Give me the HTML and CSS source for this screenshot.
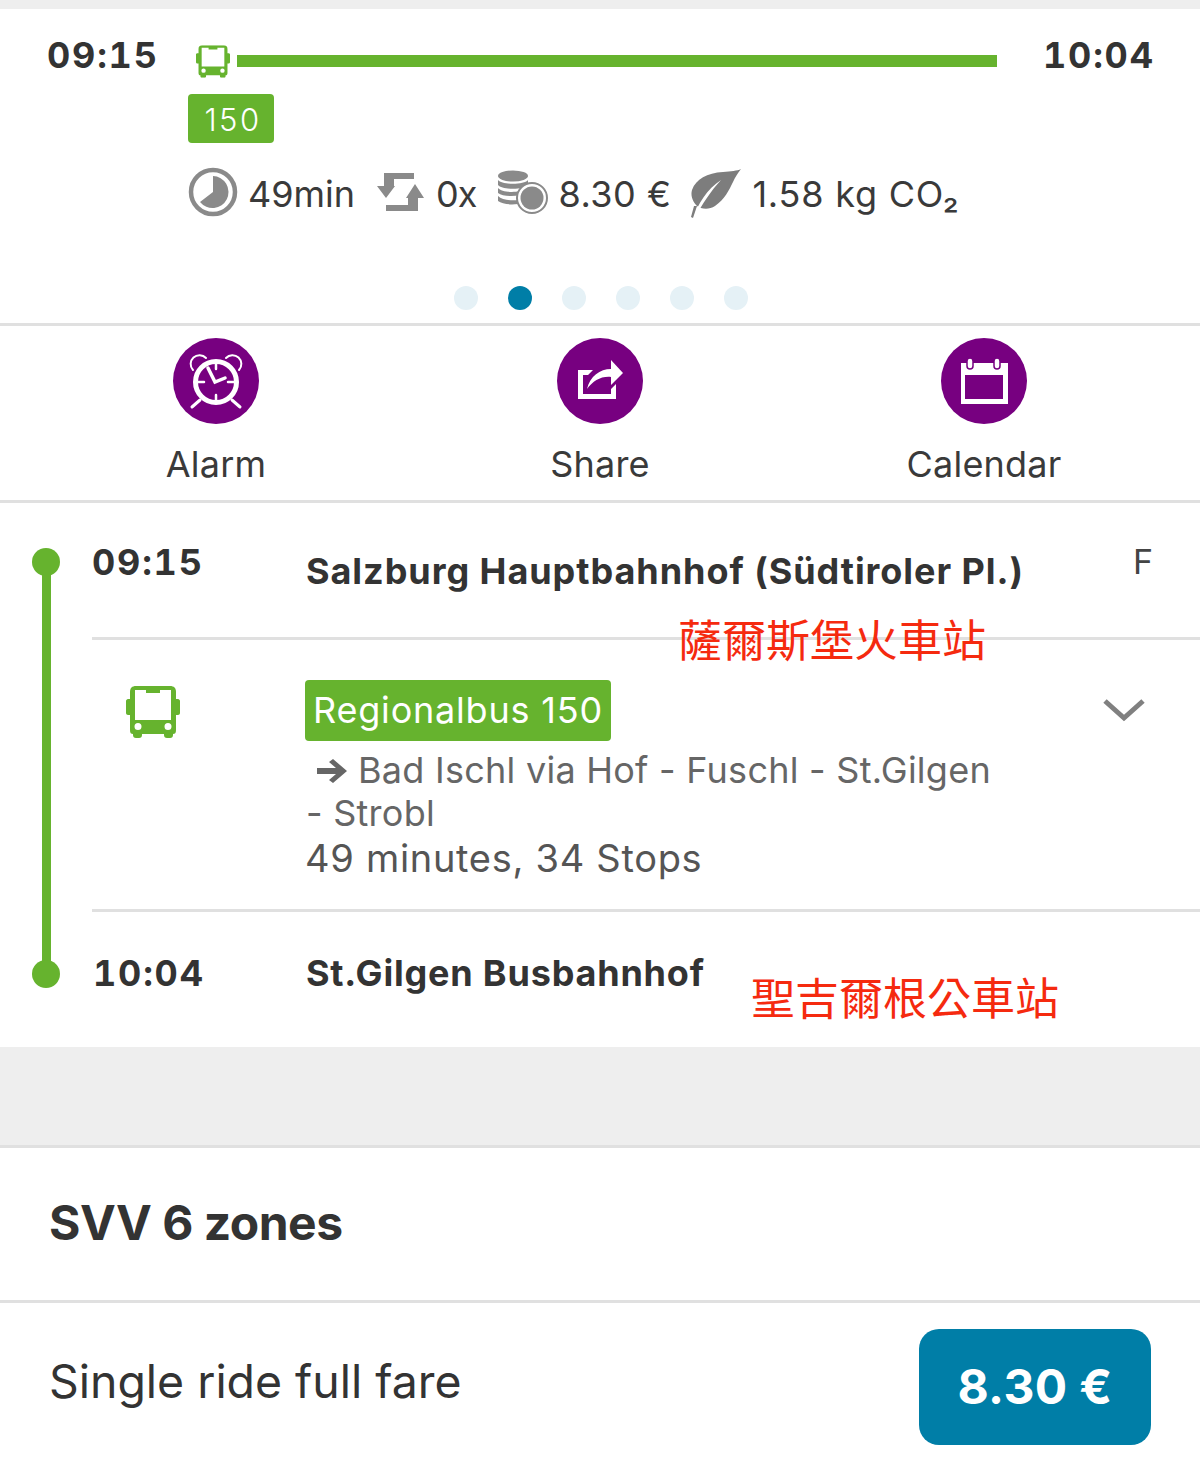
FILE: index.html
```html
<!DOCTYPE html>
<html lang="en">
<head>
    <meta charset="UTF-8">
    <meta name="viewport" content="width=device-width, initial-scale=1.0">
    <title>Trip details</title>
    <link rel="stylesheet" href="styles.css">
</head>
<body>
    <section class="summary">
        <div class="summary-top">
            <div class="summary-time">09:15</div>
            <div class="summary-track">
                <svg class="bus-small" viewBox="0 0 54 52"><use href="#bus"/></svg>
                <div class="track-bar"></div>
            </div>
            <div class="summary-time summary-end">10:04</div>
        </div>
        <div class="line-badge">150</div>
        <div class="stats">
            <svg class="stat-clock" viewBox="0 0 50 50">
                <circle cx="25" cy="25" r="22" fill="none" stroke="#8a8a8a" stroke-width="4.5"/>
                <path d="M25 9A16 16 0 1 1 12 35L25 25Z" fill="#8a8a8a"/>
            </svg>
            <span class="stat-text">49min</span>
            <svg class="stat-transfer" viewBox="0 0 47 38">
                <path d="M7 0H37V6H17V13H18L9 25L0 13H7Z" fill="#8a8a8a"/>
                <path d="M9 38V32H31V25H29L38 11L47 25H41V38Z" fill="#8a8a8a"/>
            </svg>
            <span class="stat-text stat-changes">0x</span>
            <svg class="stat-coins" viewBox="0 0 50 44">
                <ellipse cx="15" cy="6" rx="15" ry="5.5" fill="#8a8a8a"/>
                <path d="M0 10C4 15 26 15 30 10V15C26 20 4 20 0 15Z" fill="#8a8a8a"/>
                <path d="M0 18C4 23 22 23 26 19L22 25C14 27 4 26 0 23Z" fill="#8a8a8a"/>
                <path d="M0 26C4 30 14 31 20 30L20 34C12 35 4 34 0 31Z" fill="#8a8a8a"/>
                <circle cx="34" cy="28" r="15" fill="#fff" stroke="#8a8a8a" stroke-width="2"/>
                <circle cx="34" cy="28" r="11.5" fill="#8a8a8a"/>
            </svg>
            <span class="stat-text stat-price">8.30 €</span>
            <svg class="stat-leaf" viewBox="0 0 50 50">
                <path d="M50 1C46 3 40 3 32 4C16 5 5 11 1 22C-1 29 3 35 6 38C10 41 18 42 24 38C34 31 38 22 42 14C44 9 47 5 50 1Z" fill="#7d7d7d"/>
                <path d="M2 50C7 36 16 21 30 12C20 23 11 36 4 50Z" fill="#fff"/>
                <path d="M0 49L3 38L6 38L2 50Z" fill="#7d7d7d"/>
            </svg>
            <span class="stat-text stat-co2">1.58 kg CO₂</span>
        </div>
        <div class="dots">
            <span class="dot"></span>
            <span class="dot active"></span>
            <span class="dot"></span>
            <span class="dot"></span>
            <span class="dot"></span>
            <span class="dot"></span>
        </div>
    </section>

    <section class="actions">
        <div class="action">
            <svg class="action-icon" viewBox="0 0 86 86">
                <circle cx="43" cy="43" r="43" fill="#770080"/>
                <g fill="none" stroke="#fff" stroke-linecap="round">
                    <circle cx="43" cy="44" r="20.5" stroke-width="5"/>
                    <path d="M20 32A8 8 0 1 1 33 20" stroke-width="2"/>
                    <path d="M53 20A8 8 0 1 1 66 32" stroke-width="2"/>
                    <path d="M27 62L19 69M59 62L67 69" stroke-width="3"/>
                    <path d="M43 26V31M43 57V62M25 44H31M55 44H61" stroke-width="2.5"/>
                    <path d="M35 30L42 44L52 40" stroke-width="3.5"/>
                </g>
            </svg>
            <div class="action-label">Alarm</div>
        </div>
        <div class="action">
            <svg class="action-icon" viewBox="0 0 86 86">
                <circle cx="43" cy="43" r="43" fill="#770080"/>
                <path d="M21 32H36L31 37H26V56H54V51L59 46V61H21Z" fill="#fff"/>
                <path d="M30 51C33 38 43 31 54 31V22L66 35L54 47V39C44 38 36 43 30 51Z" fill="#fff"/>
            </svg>
            <div class="action-label">Share</div>
        </div>
        <div class="action">
            <svg class="action-icon" viewBox="0 0 86 86">
                <circle cx="43" cy="43" r="43" fill="#770080"/>
                <path fill-rule="evenodd" d="M20 25H67V66H20ZM24 37V61H62V37Z" fill="#fff"/>
                <rect x="26" y="20" width="6" height="11" rx="3" fill="#fff" stroke="#770080" stroke-width="1.5"/>
                <rect x="53" y="20" width="6" height="11" rx="3" fill="#fff" stroke="#770080" stroke-width="1.5"/>
            </svg>
            <div class="action-label">Calendar</div>
        </div>
    </section>

    <section class="journey">
        <div class="rail">
            <span class="rail-dot"></span>
            <span class="rail-line"></span>
            <span class="rail-dot"></span>
        </div>
        <div class="stops">
            <div class="stop stop-first">
                <div class="stop-time">09:15</div>
                <div class="stop-name">Salzburg Hauptbahnhof (Südtiroler Pl.)</div>
                <div class="stop-platform">F</div>
                <div class="note note-first">薩爾斯堡火車站</div>
            </div>
            <div class="leg">
                <svg class="bus-large" viewBox="0 0 54 52"><use href="#bus"/></svg>
                <div class="leg-info">
                    <div class="leg-badge">Regionalbus 150</div>
                    <div class="leg-direction"><svg class="leg-arrow" viewBox="0 0 32 24"><path d="M1 9H20L13 3L17 0L31 12L17 24L13 21L20 15H1Z" fill="#666"/></svg>Bad Ischl via Hof - Fuschl - St.Gilgen<br>- Strobl</div>
                    <div class="leg-duration">49 minutes, 34 Stops</div>
                </div>
                <svg class="chevron" viewBox="0 0 44 24"><path d="M3 3L22 20L41 3" fill="none" stroke="#808080" stroke-width="5"/></svg>
            </div>
            <div class="stop stop-last">
                <div class="stop-time">10:04</div>
                <div class="stop-name">St.Gilgen Busbahnhof</div>
                <div class="note note-last">聖吉爾根公車站</div>
            </div>
        </div>
    </section>

    <div class="spacer"></div>

    <section class="zone">SVV 6 zones</section>

    <section class="fare">
        <div class="fare-name">Single ride full fare</div>
        <div class="fare-price">8.30 €</div>
    </section>

    <svg class="defs" width="0" height="0">
        <symbol id="bus" viewBox="0 0 54 52">
            <path fill-rule="evenodd" d="M10 0H44C48 0 50 2 50 6V13H52C53 13 54 14 54 15V27C54 28 53 29 52 29H50V44C50 47 49 48 47 48V49C47 51 46 52 44 52H41C39 52 38 51 38 49V48H16V49C16 51 15 52 13 52H10C8 52 7 51 7 49V48C5 48 4 47 4 44V29H2C1 29 0 28 0 27V15C0 14 1 13 2 13H4V6C4 2 6 0 10 0ZM9 4V34H45V4H34V7H20V4ZM12 37A3.5 3.5 0 1 0 12 44A3.5 3.5 0 1 0 12 37ZM42 37A3.5 3.5 0 1 0 42 44A3.5 3.5 0 1 0 42 37Z" fill="#66b32e"/>
        </symbol>
    </svg>
</body>
</html>
```

FILE: styles.css
```css
* {
    box-sizing: border-box;
}
body {
    font-family: Inter, 'Noto Sans CJK TC', sans-serif;
    background-color: #fff;
    color: #333;
    margin: 0;
    width: 1200px;
    height: 1468px;
    overflow: hidden;
}
.defs {
    position: absolute;
}
.summary {
    border-top: 9px solid #eee;
    border-bottom: 3px solid #e0e0e0;
    height: 326px;
    padding: 26px 48px 0 47px;
}
.summary-top {
    display: flex;
    align-items: flex-start;
    height: 59px;
}
.summary-time {
    font-size: 36px;
    font-weight: 700;
    line-height: 40px;
    letter-spacing: 1.8px;
    font-variant-numeric: tabular-nums;
    width: 141px;
}
.summary-end {
    width: 109px;
    margin-left: 46px;
    text-align: right;
    white-space: nowrap;
}
.summary-track {
    display: flex;
    align-items: flex-start;
    flex: 1;
    padding: 10px 0 0 8px;
}
.bus-small {
    width: 34px;
    height: 33px;
}
.track-bar {
    flex: 1;
    height: 12px;
    margin: 10px 0 0 7px;
    background-color: #66b32e;
}
.line-badge {
    width: 86px;
    height: 49px;
    margin-left: 141px;
    padding-left: 4px;
    border-radius: 4px;
    background-color: #66b32e;
    color: #fff;
    font-size: 31px;
    font-weight: 300;
    line-height: 51px;
    letter-spacing: 2.4px;
    text-align: center;
}
.stats {
    display: flex;
    align-items: center;
    height: 50px;
    margin: 24px 0 0 141px;
}
.stat-text {
    font-size: 36px;
    line-height: 48px;
    padding-top: 3px;
    white-space: nowrap;
    color: #3a3a3a;
}
.stat-changes {
    letter-spacing: -1px;
}
.stat-price {
    letter-spacing: 0.5px;
}
.stat-co2 {
    letter-spacing: 0.8px;
}
.stat-clock {
    width: 50px;
    height: 50px;
    margin-right: 10px;
}
.stat-transfer {
    width: 47px;
    height: 38px;
    margin: 0 12px 0 22px;
}
.stat-coins {
    width: 50px;
    height: 44px;
    margin: 0 10px 0 22px;
}
.stat-leaf {
    width: 50px;
    height: 50px;
    margin: 2px 11px 0 20px;
}
.dots {
    display: flex;
    justify-content: center;
    gap: 30px;
    margin-top: 69px;
    padding-left: 2px;
}
.dot {
    width: 24px;
    height: 24px;
    border-radius: 50%;
    background-color: #e5f1f6;
}
.dot.active {
    background-color: #007ea7;
}
.actions {
    display: grid;
    grid-template-columns: repeat(3, 1fr);
    height: 177px;
    padding: 12px 24px 0;
    border-bottom: 3px solid #e0e0e0;
}
.action {
    display: flex;
    flex-direction: column;
    align-items: center;
}
.action-icon {
    width: 86px;
    height: 86px;
}
.action-label {
    font-size: 36px;
    line-height: 44px;
    margin-top: 18px;
    letter-spacing: 0.2px;
    color: #3a3a3a;
}
.journey {
    display: flex;
    height: 544px;
}
.rail {
    display: flex;
    flex-direction: column;
    align-items: center;
    width: 28px;
    height: 440px;
    margin: 45px 32px 0;
}
.rail-dot {
    flex: none;
    width: 28px;
    height: 28px;
    border-radius: 50%;
    background-color: #66b32e;
}
.rail-line {
    flex: 1;
    width: 9px;
    margin: -2px 0;
    background-color: #66b32e;
}
.stops {
    flex: 1;
    position: relative;
}
.stop {
    position: relative;
    display: flex;
    align-items: flex-start;
}
.stop-first {
    height: 137px;
    padding-top: 39px;
    border-bottom: 3px solid #e0e0e0;
}
.stop-last {
    height: 135px;
    padding-top: 41px;
}
.stop-time {
    width: 214px;
    font-size: 36px;
    font-weight: 700;
    line-height: 40px;
    letter-spacing: 1.8px;
    font-variant-numeric: tabular-nums;
}
.stop-name {
    font-size: 36px;
    font-weight: 700;
    line-height: 40px;
    letter-spacing: 0.95px;
}
.stop-first .stop-name {
    margin-top: 9px;
}
.stop-last .stop-time {
    padding-left: 1px;
}
.stop-last .stop-name {
    letter-spacing: 0.8px;
}
.stop-platform {
    margin-left: auto;
    margin-right: 47px;
    font-size: 34px;
    line-height: 40px;
    color: #444;
}
.note {
    position: absolute;
    font-size: 44px;
    font-weight: 400;
    line-height: 56px;
    color: #f52a0f;
    white-space: nowrap;
}
.note-first {
    left: 586px;
    top: 110px;
}
.note-last {
    left: 659px;
    top: 59px;
}
.leg {
    display: flex;
    align-items: flex-start;
    height: 272px;
    padding-top: 40px;
    border-bottom: 3px solid #e0e0e0;
}
.bus-large {
    width: 54px;
    height: 52px;
    margin: 6px 126px 0 34px;
}
.leg-info {
    width: 700px;
}
.leg-badge {
    display: inline-block;
    height: 61px;
    margin-left: -1px;
    padding: 0 8px;
    border-radius: 4px;
    background-color: #66b32e;
    color: #fff;
    font-size: 36px;
    line-height: 61px;
    letter-spacing: 0.8px;
}
.leg-direction {
    font-size: 36px;
    line-height: 43px;
    letter-spacing: 0.26px;
    color: #666;
    margin-top: 8px;
}
.leg-arrow {
    width: 32px;
    height: 24px;
    margin: 0 10px 0 10px;
}
.leg-duration {
    margin-left: -1px;
    font-size: 38px;
    line-height: 47px;
    letter-spacing: 0.7px;
    color: #555;
}
.chevron {
    width: 44px;
    height: 24px;
    margin: 18px 0 0 96px;
}
.spacer {
    height: 101px;
    background-color: #eee;
    border-bottom: 3px solid #e0e0e0;
}
.zone {
    height: 155px;
    padding: 0 49px;
    border-bottom: 3px solid #e0e0e0;
    font-size: 48px;
    font-weight: 700;
    line-height: 150px;
    letter-spacing: -0.5px;
}
.fare {
    display: flex;
    justify-content: space-between;
    align-items: flex-start;
    padding: 26px 49px 0;
}
.fare-name {
    font-size: 46.4px;
    line-height: 58px;
    margin-top: 23px;
}
.fare-price {
    width: 232px;
    height: 116px;
    border-radius: 20px;
    background-color: #007ea7;
    color: #fff;
    font-size: 48px;
    font-weight: 700;
    line-height: 116px;
    letter-spacing: 0.4px;
    text-align: center;
}
```
